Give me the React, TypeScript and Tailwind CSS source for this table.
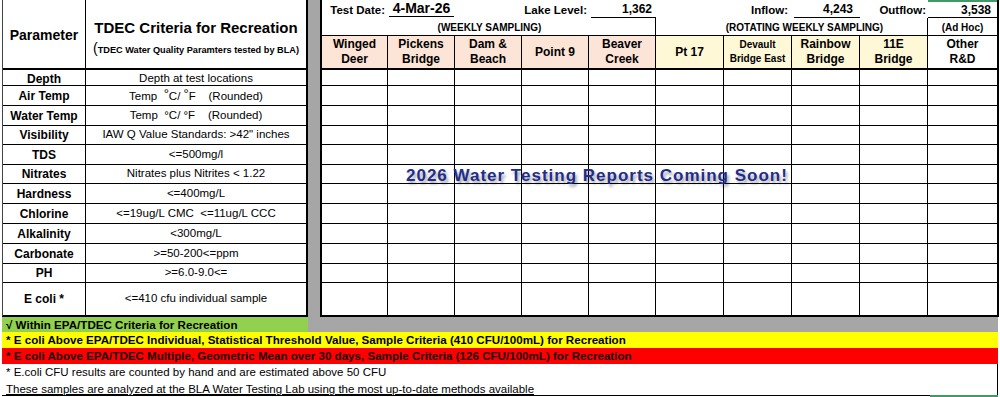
import React from "react";

const leftRows: { label: string; crit: React.ReactNode; h: string }[] = [
  { label: "Depth", crit: "Depth at test locations", h: "h-[16px]" },
  {
    label: "Air Temp",
    crit: (
      <span className="whitespace-pre">
        {"Temp  "}
        <span className="relative -top-[2px] text-[13px]">°</span>
        {"C/ "}
        <span className="relative -top-[2px] text-[13px]">°</span>
        {"F    (Rounded)"}
      </span>
    ),
    h: "h-[20px]",
  },
  {
    label: "Water Temp",
    crit: <span className="whitespace-pre">{"Temp  °C/ °F    (Rounded)"}</span>,
    h: "h-[20px]",
  },
  { label: "Visibility", crit: 'IAW Q Value Standards: >42" inches', h: "h-[19px]" },
  { label: "TDS", crit: "<=500mg/l", h: "h-[20px]" },
  { label: "Nitrates", crit: "Nitrates plus Nitrites < 1.22", h: "h-[19px]" },
  { label: "Hardness", crit: "<=400mg/L", h: "h-[20px]" },
  {
    label: "Chlorine",
    crit: <span className="whitespace-pre">{"<=19ug/L CMC  <=11ug/L CCC"}</span>,
    h: "h-[20px]",
  },
  { label: "Alkalinity", crit: "<300mg/L", h: "h-[20px]" },
  { label: "Carbonate", crit: ">=50-200<=ppm", h: "h-[20px]" },
  { label: "PH", crit: ">=6.0-9.0<=", h: "h-[19px]" },
  { label: "E coli *", crit: "<=410 cfu individual sample", h: "h-[32px]" },
];

const cols = "grid grid-cols-[66px_67px_67px_67px_67px_68px_68px_68px_68px_1fr]";

const headers: { l1: string; l2?: string; bg: string; small?: boolean }[] = [
  { l1: "Winged", l2: "Deer", bg: "bg-[#fce4d6]" },
  { l1: "Pickens", l2: "Bridge", bg: "bg-[#fce4d6]" },
  { l1: "Dam &", l2: "Beach", bg: "bg-[#fce4d6]" },
  { l1: "Point 9", bg: "bg-[#fce4d6]" },
  { l1: "Beaver", l2: "Creek", bg: "bg-[#fce4d6]" },
  { l1: "Pt 17", bg: "bg-[#fff8d6]" },
  { l1: "Devault", l2: "Bridge East", bg: "bg-[#fff8d6]", small: true },
  { l1: "Rainbow", l2: "Bridge", bg: "bg-[#fff8d6]" },
  { l1: "11E", l2: "Bridge", bg: "bg-[#fff8d6]" },
  { l1: "Other", l2: "R&D", bg: "bg-white" },
];

export default function App() {
  return (
    <div className="relative w-[1000px] h-[397px] overflow-hidden bg-white text-black font-['Liberation_Sans',Arial,Helvetica,sans-serif]">
      {/* Top area */}
      <div className="flex h-[317px] pl-[2px]">
        {/* Left table */}
        <div className="w-[306px] border-l border-l-[#444] border-r-2 border-r-black border-b-2 border-b-black flex flex-col">
          <div className="grid grid-cols-[83px_1fr] h-[70px] border-b-2 border-black">
            <div className="border-r border-black flex items-center justify-center pt-[2px] text-[14px] font-bold">
              Parameter
            </div>
            <div className="flex flex-col items-center pt-[19px]">
              <div className="text-[15px] leading-[18px] font-bold">TDEC Criteria for Recreation</div>
              <div className="mt-[3px] leading-[16px] font-bold text-[9.2px] whitespace-nowrap">
                <span className="text-[14px] font-normal">(</span>TDEC Water Quality Paramters tested by BLA)
              </div>
            </div>
          </div>
          {leftRows.map((r, i) => (
            <div
              key={r.label}
              className={`grid grid-cols-[83px_1fr] ${r.h} ${i < leftRows.length - 1 ? "border-b border-black" : ""}`}
            >
              <div className="border-r border-black flex items-center justify-center text-[12px] font-bold">
                {r.label}
              </div>
              <div className="flex items-center justify-center text-[11.5px]">{r.crit}</div>
            </div>
          ))}
        </div>

        {/* Gray separator */}
        <div className="w-[12px] bg-[#a6a6a6]" />

        {/* Right table */}
        <div className="w-[679px] border-l-2 border-r-2 border-b-2 border-black flex flex-col">
          {/* Row 1 */}
          <div className={`${cols} h-[18px] text-[11.5px] font-bold`}>
            <div className="flex items-end justify-end pr-[3px] leading-[15px]">Test Date:</div>
            <div className="mx-[1px] mb-[1px] border-b border-black flex items-end justify-center text-[14px] leading-[15px]">
              4-Mar-26
            </div>
            <div />
            <div className="flex items-end justify-end pr-[2px] leading-[15px]">Lake Level:</div>
            <div className="ml-[2px] border-b border-black flex items-end justify-end pr-[4px] text-[12px] leading-[15px]">
              1,362
            </div>
            <div />
            <div className="flex items-end justify-end pr-[4px] leading-[15px]">Inflow:</div>
            <div className="ml-[2px] border-b border-black flex items-end justify-end pr-[7px] text-[12px] leading-[15px]">
              4,243
            </div>
            <div className="flex items-end justify-end pr-[2px] leading-[15px]">Outflow:</div>
            <div className="border-b border-black border-t-2 border-t-[#3f9a66] flex items-end justify-end pr-[6px] text-[12px] leading-[14px]">
              3,538
            </div>
          </div>
          {/* Row 2 */}
          <div className={`${cols} h-[18px] border-b border-black text-[10px] font-bold leading-[12px]`}>
            <div className="col-span-5 border-r border-black flex items-end justify-center pl-[2px] pb-[1px]">
              (WEEKLY SAMPLING)
            </div>
            <div className="col-span-4 border-r border-black flex items-end justify-center pl-[26px] pb-[1px]">
              (ROTATING WEEKLY SAMPLING)
            </div>
            <div className="flex items-end justify-center pb-[1px]">(Ad Hoc)</div>
          </div>
          {/* Header */}
          <div className={`${cols} h-[34px] border-b-2 border-black`}>
            {headers.map((h, i) => (
              <div
                key={h.l1}
                className={`${h.bg} ${i < 9 ? "border-r border-black" : ""} flex flex-col items-center justify-center font-bold text-center ${
                  h.small ? "text-[10px] leading-[14px]" : "text-[12px] leading-[15px]"
                }`}
              >
                <span>{h.l1}</span>
                {h.l2 && <span>{h.l2}</span>}
              </div>
            ))}
          </div>
          {/* Data rows */}
          {leftRows.map((r, i) => (
            <div
              key={r.label}
              className={`${cols} ${r.h} ${i < leftRows.length - 1 ? "border-b border-black" : ""}`}
            >
              {headers.map((h, j) => (
                <div key={h.l1} className={j < 9 ? "border-r border-black" : ""} />
              ))}
            </div>
          ))}
        </div>
      </div>

      {/* Legend */}
      <div className="ml-[2px] w-[996px] text-[11.5px]">
        <div className="flex h-[15px]">
          <div className="w-[306px] bg-[#92d050] font-bold text-[11.6px] leading-[15px] pl-[4px] whitespace-nowrap">
            √ Within EPA/TDEC Criteria for Recreation
          </div>
          <div className="flex-1 bg-[#a6a6a6]" />
        </div>
        <div className="h-[16px] bg-[#ffff00] font-bold text-[11.6px] leading-[16px] pl-[4px] whitespace-nowrap">
          * E coli Above EPA/TDEC Individual, Statistical Threshold Value, Sample Criteria (410 CFU/100mL) for Recreation
        </div>
        <div className="h-[16px] bg-[#ff0000] font-bold text-[11.6px] leading-[16px] pl-[4px] whitespace-nowrap text-[#1a0000]">
          * E coli Above EPA/TDEC Multiple, Geometric Mean over 30 days, Sample Criteria (126 CFU/100mL) for Recreation
        </div>
        <div className="h-[17px] border-r border-black leading-[17px] pl-[4px] whitespace-nowrap">
          * E.coli CFU results are counted by hand and are estimated above 50 CFU
        </div>
        <div className="h-[15px] border-r border-black border-b border-b-black overflow-hidden leading-[16px] pl-[4px] whitespace-nowrap">
          <span className="underline">
            These samples are analyzed at the BLA Water Testing Lab using the most up-to-date methods available
          </span>
        </div>
      </div>

      {/* Selection indicator */}
      <div className="absolute left-[930px] top-[395px] w-[68px] h-[2px] bg-[#3f9a66]" />

      {/* Overlay announcement */}
      <div className="absolute left-[406px] top-[166px] text-[17px] leading-[20px] font-bold tracking-[1px] text-[#1f2d8c] whitespace-nowrap [text-shadow:2px_3px_3px_rgba(0,0,0,0.35)]">
        2026 Water Testing Reports Coming Soon!
      </div>
    </div>
  );
}
